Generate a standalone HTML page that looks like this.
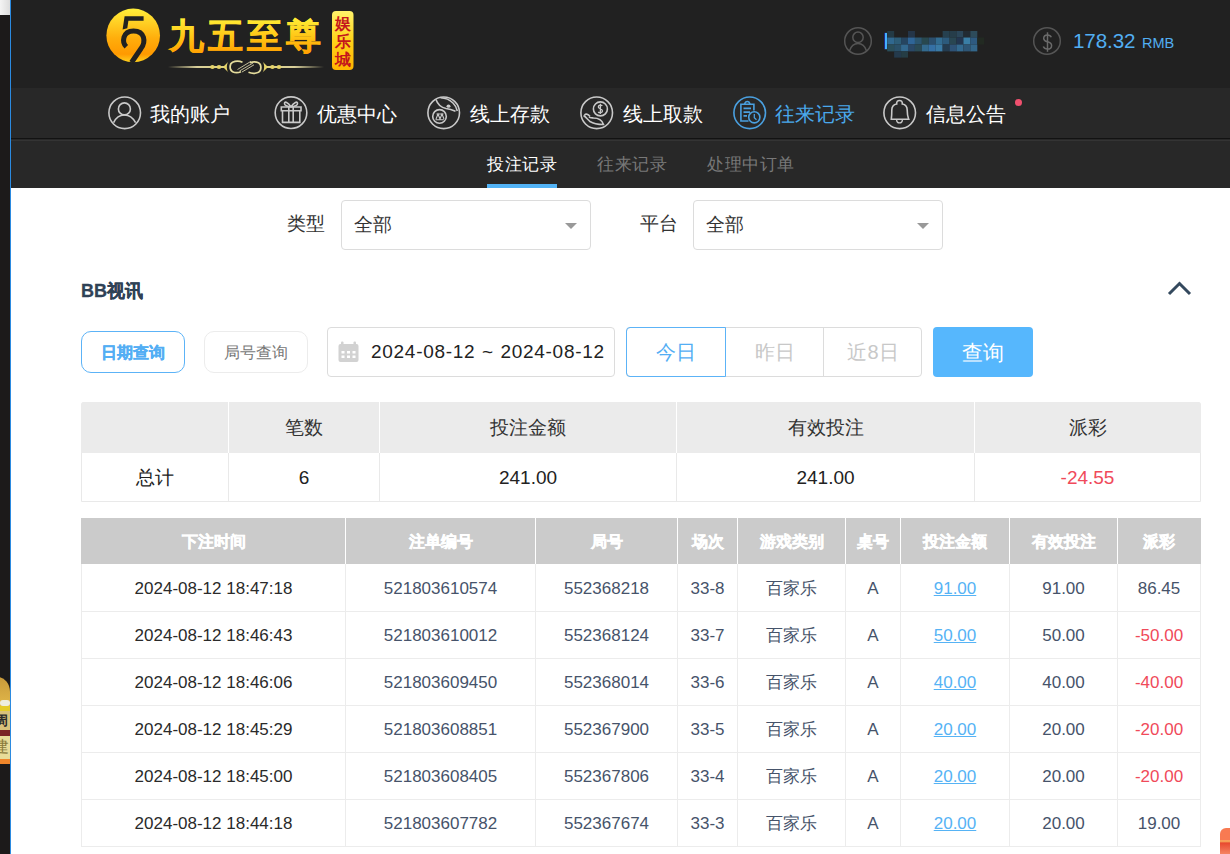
<!DOCTYPE html>
<html><head><meta charset="utf-8">
<style>
*{margin:0;padding:0;box-sizing:border-box}
html,body{width:1230px;height:854px;overflow:hidden;background:#fff;font-family:"Liberation Sans",sans-serif;color:#333}
.abs{position:absolute}
#lstrip{left:0;top:0;width:10px;height:854px;background:#1c1a1a}
#lwhite{left:0;top:0;width:10px;height:15px;background:linear-gradient(90deg,#f4f4f4,#dcdcdc)}
#lblue{left:10px;top:0;width:1px;height:854px;background:#2b8ae0}
#hdr{left:11px;top:0;width:1219px;height:88px;background:#212121}
#nav{left:11px;top:88px;width:1219px;height:50px;background:#282828}
#navline{left:11px;top:138px;width:1219px;height:3px;background:linear-gradient(#121212 0,#121212 33%,#282828 33%,#282828 66%,#343434 66%)}
#sub{left:11px;top:140px;width:1219px;height:48px;background:linear-gradient(#343434 0,#343434 1px,#282828 1px)}
.navt{position:absolute;top:101px;font-size:20px;line-height:26px;color:#fff;white-space:nowrap}
.subt{position:absolute;top:150.5px;font-size:17.45px;line-height:26px;color:#787878;white-space:nowrap;letter-spacing:0.6px}
.lbl{position:absolute;font-size:19px;line-height:24px;color:#333}
.sel{position:absolute;border:1px solid #dcdcdc;border-radius:4px;background:#fff}
.sel span{position:absolute;left:12px;top:12px;font-size:19px;line-height:24px;color:#333}
.sel i{position:absolute;right:13px;top:22px;width:0;height:0;border-left:6px solid transparent;border-right:6px solid transparent;border-top:6px solid #999}
.c{position:absolute;text-align:center;white-space:nowrap}
.hl{position:absolute;height:1px}
.vl{position:absolute;width:1px}
</style></head><body>
<div id="lstrip" class="abs"></div><div id="lwhite" class="abs"></div><div id="lblue" class="abs"></div>
<div id="hdr" class="abs"></div><div id="nav" class="abs"></div><div id="navline" class="abs"></div><div id="sub" class="abs"></div>
<!-- logo -->
<svg class="abs" style="left:0;top:0" width="400" height="88" viewBox="0 0 400 88">
<defs>
<linearGradient id="gc" x1="0" y1="0" x2="0" y2="1"><stop offset="0" stop-color="#ffee3a"/><stop offset="0.55" stop-color="#ffae0c"/><stop offset="0.85" stop-color="#ff9900"/><stop offset="1" stop-color="#ffd21e"/></linearGradient>
<linearGradient id="gt" x1="0" y1="0" x2="0" y2="1"><stop offset="0" stop-color="#fff23a"/><stop offset="0.6" stop-color="#ffbf10"/><stop offset="1" stop-color="#ff9c00"/></linearGradient>
<linearGradient id="gb" x1="0" y1="0" x2="0" y2="1"><stop offset="0" stop-color="#fff36a"/><stop offset="0.5" stop-color="#ffd21a"/><stop offset="1" stop-color="#ffb400"/></linearGradient>
<linearGradient id="gl" x1="0" y1="0" x2="1" y2="0"><stop offset="0" stop-color="#e8dca0" stop-opacity="0"/><stop offset="0.3" stop-color="#e8dca0"/><stop offset="0.7" stop-color="#e8dca0"/><stop offset="1" stop-color="#e8dca0" stop-opacity="0"/></linearGradient>
</defs>
<circle cx="133.2" cy="35.4" r="26.8" fill="url(#gc)"/>
<path d="M124.6 16.3 H143.6 V20.7 H128.4 L127.3 28.2 L122.6 29.6 Z" fill="#212121"/>
<path d="M126.3 46.8 C121.8 42.5 122.3 31 133.5 30.9 C145 31 146 42 141 48.5 L131.5 62.5" fill="none" stroke="#212121" stroke-width="5"/>
<text x="168.5" y="48.3" font-family="Liberation Sans, sans-serif" font-weight="bold" font-size="35" fill="url(#gt)" stroke="url(#gt)" stroke-width="0.5" letter-spacing="4">九五至尊</text>
<rect x="332" y="11" width="21.5" height="59" rx="4" fill="url(#gb)"/>
<text font-family="Liberation Serif, serif" font-weight="bold" font-size="15.5" fill="#c4161c"><tspan x="335" y="29">娱</tspan><tspan x="335" y="47">乐</tspan><tspan x="335" y="65">城</tspan></text>
<linearGradient id="gl2" x1="0" y1="0" x2="1" y2="0"><stop offset="0" stop-color="#d8cf9a" stop-opacity="0"/><stop offset="0.5" stop-color="#d8cf9a"/><stop offset="1" stop-color="#e0d488"/></linearGradient>
<linearGradient id="gl3" x1="1" y1="0" x2="0" y2="0"><stop offset="0" stop-color="#d8cf9a" stop-opacity="0"/><stop offset="0.5" stop-color="#d8cf9a"/><stop offset="1" stop-color="#e0d488"/></linearGradient>
<rect x="168" y="66" width="58" height="2" fill="url(#gl2)"/>
<rect x="265" y="66" width="59" height="2" fill="url(#gl3)"/>
<g fill="#e6d46a"><ellipse cx="212.4" cy="67" rx="2.3" ry="1.9"/><ellipse cx="219" cy="67" rx="2.3" ry="1.9"/><ellipse cx="272.4" cy="67" rx="2.3" ry="1.9"/><ellipse cx="279" cy="67" rx="2.3" ry="1.9"/>
<path d="M223 67 L228.5 61.5 C226.3 64 226.3 70 228.5 72.5 Z"/><path d="M268 67 L262.5 61.5 C264.7 64 264.7 70 262.5 72.5 Z"/></g>
<g fill="none" stroke="#e4dc9c" stroke-width="1.7">
<path d="M242.5 62.3 C239.5 61 235.5 61 232.5 62.3 C229.3 64 229.3 70 232.5 71.7 C235 73 238.5 72.8 241 71.8"/>
<path d="M248.5 72.2 C251.5 73.5 255.5 73.5 258.5 72.2 C261.7 70.5 261.7 64.5 258.5 62.8 C256 61.5 252.5 61.7 250 62.7"/>
</g>
<g fill="none" stroke="#d6d0a8" stroke-width="0.9">
<path d="M237.5 69.5 L251 61.3 M239.5 71 L253 63 M242 72 L254 64.8"/>
</g>
</svg>

<!-- user -->
<svg class="abs" style="left:830px;top:20px" width="360" height="45" viewBox="830 20 360 45">
<g fill="none" stroke="#555" stroke-width="1.5">
<circle cx="858" cy="41" r="13.3"/>
<circle cx="858" cy="37.3" r="5.2"/>
<path d="M849.3 51.2 C851 46.2 854.5 43.6 858 43.6 C861.5 43.6 865 46.2 866.7 51.2"/>
<circle cx="1047" cy="41" r="13.3"/>
</g>
<g fill="none" stroke="#6a6a6a" stroke-width="1.5">
<path d="M1047.5 32.3 V51.8"/>
<path d="M1051.3 37.2 C1050.6 35.6 1049.2 34.9 1047.5 34.9 C1045.2 34.9 1043.7 36.3 1043.7 38.4 C1043.7 43.2 1051.6 40.2 1051.6 45.4 C1051.6 47.7 1049.9 49.1 1047.5 49.1 C1045.4 49.1 1043.9 48.2 1043.3 46.6"/>
</g>
<g><rect x="887.20" y="31" width="6.95" height="6.50" fill="#233a45"/>
<rect x="907.99" y="31" width="6.95" height="6.50" fill="#243548"/>
<rect x="942.64" y="31" width="6.95" height="6.50" fill="#26404f"/>
<rect x="949.57" y="31" width="6.95" height="6.50" fill="#263d4a"/>
<rect x="956.50" y="31" width="6.95" height="6.50" fill="#2b4659"/>
<rect x="963.43" y="31" width="6.95" height="6.50" fill="#222b33"/>
<rect x="970.36" y="31" width="6.95" height="6.50" fill="#2d4b5a"/>
<rect x="887.20" y="37.5" width="6.95" height="7.00" fill="#30688f"/>
<rect x="894.13" y="37.5" width="6.95" height="7.00" fill="#2d5d78"/>
<rect x="901.06" y="37.5" width="6.95" height="7.00" fill="#264560"/>
<rect x="907.99" y="37.5" width="6.95" height="7.00" fill="#2f6597"/>
<rect x="914.92" y="37.5" width="6.95" height="7.00" fill="#2b5670"/>
<rect x="921.85" y="37.5" width="6.95" height="7.00" fill="#28484f"/>
<rect x="928.78" y="37.5" width="6.95" height="7.00" fill="#2b4f6e"/>
<rect x="935.71" y="37.5" width="6.95" height="7.00" fill="#326c91"/>
<rect x="942.64" y="37.5" width="6.95" height="7.00" fill="#2c5a7c"/>
<rect x="949.57" y="37.5" width="6.95" height="7.00" fill="#294652"/>
<rect x="956.50" y="37.5" width="6.95" height="7.00" fill="#233650"/>
<rect x="963.43" y="37.5" width="6.95" height="7.00" fill="#3a7ea6"/>
<rect x="970.36" y="37.5" width="6.95" height="7.00" fill="#2e5a80"/>
<rect x="887.20" y="44.5" width="6.95" height="6.90" fill="#2a4e5a"/>
<rect x="894.13" y="44.5" width="6.95" height="6.90" fill="#2a5068"/>
<rect x="901.06" y="44.5" width="6.95" height="6.90" fill="#33698f"/>
<rect x="907.99" y="44.5" width="6.95" height="6.90" fill="#2a4866"/>
<rect x="914.92" y="44.5" width="6.95" height="6.90" fill="#2a4a55"/>
<rect x="921.85" y="44.5" width="6.95" height="6.90" fill="#336a8e"/>
<rect x="928.78" y="44.5" width="6.95" height="6.90" fill="#3570a5"/>
<rect x="935.71" y="44.5" width="6.95" height="6.90" fill="#3a7aa5"/>
<rect x="942.64" y="44.5" width="6.95" height="6.90" fill="#243c50"/>
<rect x="949.57" y="44.5" width="6.95" height="6.90" fill="#2e5276"/>
<rect x="956.50" y="44.5" width="6.95" height="6.90" fill="#33698f"/>
<rect x="963.43" y="44.5" width="6.95" height="6.90" fill="#2e5676"/>
<rect x="970.36" y="44.5" width="6.95" height="6.90" fill="#33668a"/>
<rect x="894.13" y="51.4" width="6.95" height="6.20" fill="#243a4c"/>
<rect x="901.06" y="51.4" width="6.95" height="6.20" fill="#253d45"/>
<rect x="977.3" y="37.5" width="6.9" height="7" fill="#222a22"/></g>
<rect x="884.6" y="32.9" width="2.4" height="16.3" fill="#45b0ff"/>
<rect x="884" y="32.9" width="0.8" height="16.3" fill="#1a2090"/>
</svg>
<div class="abs" style="left:1073px;top:27px;font-size:20.6px;line-height:28px;color:#52aef2;white-space:nowrap;letter-spacing:-0.1px">178.32</div>
<div class="abs" style="left:1142px;top:34px;font-size:14.5px;line-height:18px;color:#52aef2;white-space:nowrap">RMB</div>
<!-- nav icons -->
<svg class="abs" style="left:0;top:88px" width="1230" height="50" viewBox="0 88 1230 50">
<g fill="none" stroke="#c9c9c9" stroke-width="1.6">
<circle cx="124.7" cy="112.8" r="15.8"/>
<circle cx="124.4" cy="108.9" r="6"/>
<path d="M113.6 122.6 C116 117.5 120 115 124.4 115 C128.8 115 132.8 117.5 135.6 122.6"/>
<circle cx="291" cy="112.7" r="15.8"/>
<path d="M282.5 110.8 V122.4 H299.8 V110.8 M281.3 107 H301 V110.8 H281.3 Z M288.8 107 V122.4 M293.2 107 V122.4"/>
<path d="M291 106.8 C288 102 284.5 101 284.5 103.5 C284.5 105.5 288 106.5 291 106.8 C294 102 297.5 101 297.5 103.5 C297.5 105.5 294 106.5 291 106.8"/>
<circle cx="443.7" cy="112.8" r="15.8"/>
<circle cx="439.5" cy="116.4" r="6.8"/>
<path d="M436 119 L438 114 L440 119 L442 114 L444 119 M435.5 119.8 H443.8 M436.5 114 H443.5" stroke-width="1.1"/>
<path d="M436 99.5 C437.5 104 441 107.5 446 108.5 C449 109 452 109.8 455.5 111.2 M440.5 97.8 C446 98 450 100 453 103 C455.3 105.3 456.8 108 457.3 111"/><ellipse cx="448.5" cy="106.2" rx="2" ry="1.6" fill="#c9c9c9" stroke="none"/>
<circle cx="596.7" cy="112.8" r="15.8"/>
<circle cx="600.4" cy="108.9" r="7"/>
<path d="M602.3 105.8 C601.5 104.8 598.3 104.8 598.3 107 C598.3 109 602.5 108.5 602.5 111 C602.5 113 599 113 598.2 112 M600.4 103.8 V114" stroke-width="1.3"/>
<path d="M583.5 115.5 C586 117 588 120 590 121.5 C593 123.5 598 124.5 603.5 124.5 C602 120 597.5 118 593.5 118 C592 117.8 590 118 589 117 M584.5 115 C586 113.5 588 114 590 116.5"/>
<circle cx="899.7" cy="112.8" r="15.8"/>
<path d="M891.3 119.2 H908.7 C907.3 116 907.2 113 907.2 110 C907.2 106.5 905 104.5 902.3 104 C902.5 101.5 901.3 100.5 899.5 100.5 C897.7 100.5 896.5 101.5 896.7 104 C894 104.5 891.8 106.5 891.8 110 C891.8 113 891.7 116 891.3 119.2 Z"/>
<path d="M896.6 119.4 C896.6 124 902.4 124 902.4 119.4" stroke-width="1.4"/>
</g>
<g fill="none" stroke="#4aa0e0" stroke-width="1.6">
<circle cx="749.7" cy="112.8" r="15.8"/>
<path d="M748.5 121 H740.9 V104.3 H753.9 V110.5"/>
<path d="M744.5 104.3 C745 102.5 746 101.5 747.3 101.5 C748.6 101.5 749.6 102.5 750 104.3"/>
<path d="M743.5 108.4 H751 M743.5 112.1 H750 M743.5 115.9 H747"/>
<circle cx="754.3" cy="117.3" r="5.6"/>
<path d="M754.3 114 V117.8 L756.5 119.8" stroke-width="1.3"/>
</g>
</svg>


<div class="navt" style="left:150px">我的账户</div>
<div class="navt" style="left:317px">优惠中心</div>
<div class="navt" style="left:470px">线上存款</div>
<div class="navt" style="left:623px">线上取款</div>
<div class="navt" style="left:775px;color:#4aa8ec">往来记录</div>
<div class="navt" style="left:926px">信息公告</div>
<div class="abs" style="left:1015px;top:99px;width:7px;height:7px;border-radius:50%;background:#f0506e"></div>
<div class="subt" style="left:487px;color:#fff">投注记录</div>
<div class="abs" style="left:487px;top:184px;width:70px;height:4px;background:#52b3f6"></div>
<div class="subt" style="left:597px">往来记录</div>
<div class="subt" style="left:707px">处理中订单</div>

<div class="lbl" style="left:287px;top:212px">类型</div>
<div class="sel" style="left:341px;top:200px;width:250px;height:50px"><span>全部</span><i></i></div>
<div class="lbl" style="left:640px;top:212px">平台</div>
<div class="sel" style="left:693px;top:200px;width:250px;height:50px"><span>全部</span><i></i></div>

<div class="abs" style="left:81px;top:279px;font-size:18px;line-height:24px;font-weight:bold;color:#2f4256;white-space:nowrap;-webkit-text-stroke:0.3px #2f4256">BB视讯</div>
<svg class="abs" style="left:1160px;top:275px" width="40" height="30" viewBox="1160 275 40 30"><path d="M1169 294 L1179.5 283.5 L1190 294" fill="none" stroke="#34495e" stroke-width="3"/></svg>

<div class="abs" style="left:81px;top:331px;width:104px;height:42px;border:1px solid #5cb3f7;border-radius:10px;text-align:center;font-size:16px;line-height:42px;font-weight:bold;color:#53aef4;-webkit-text-stroke:0.3px #53aef4">日期查询</div>
<div class="abs" style="left:204px;top:331px;width:104px;height:42px;border:1px solid #ececec;border-radius:10px;text-align:center;font-size:16px;line-height:42px;color:#777">局号查询</div>

<div class="abs" style="left:327px;top:327px;width:288px;height:50px;border:1px solid #dcdcdc;border-radius:4px"></div>
<svg class="abs" style="left:336px;top:340px" width="26" height="26" viewBox="336 340 26 26">
<rect x="338.5" y="344" width="20" height="18" rx="2" fill="#d2d2d2"/>
<rect x="341" y="341.5" width="2.5" height="5" rx="1" fill="#d2d2d2"/><rect x="353.5" y="341.5" width="2.5" height="5" rx="1" fill="#d2d2d2"/>
<g fill="#fff"><rect x="341.5" y="351" width="3" height="2.5"/><rect x="347" y="351" width="3" height="2.5"/><rect x="352.5" y="351" width="3" height="2.5"/><rect x="341.5" y="355.5" width="3" height="2.5"/><rect x="347" y="355.5" width="3" height="2.5"/><rect x="352.5" y="355.5" width="3" height="2.5"/></g>
</svg>
<div class="abs" style="left:371px;top:339px;font-size:19px;line-height:26px;color:#222;white-space:nowrap;letter-spacing:0.72px;word-spacing:0.6px">2024-08-12 ~ 2024-08-12</div>

<div class="abs" style="left:626px;top:327px;width:296px;height:50px;border:1px solid #dcdcdc;border-radius:4px"></div>
<div class="abs" style="left:725px;top:327px;width:1px;height:50px;background:#dcdcdc"></div>
<div class="abs" style="left:823px;top:327px;width:1px;height:50px;background:#dcdcdc"></div>
<div class="abs" style="left:626px;top:327px;width:100px;height:50px;border:1px solid #5cb3f7;border-radius:4px 0 0 4px;text-align:center;font-size:20px;line-height:48px;color:#53aef4">今日</div>
<div class="abs" style="left:726px;top:327px;width:98px;height:50px;text-align:center;font-size:20px;line-height:50px;color:#c8c8c8">昨日</div>
<div class="abs" style="left:824px;top:327px;width:98px;height:50px;text-align:center;font-size:20px;line-height:50px;color:#c8c8c8">近8日</div>
<div class="abs" style="left:933px;top:327px;width:100px;height:50px;border-radius:4px;background:#56b7fd;text-align:center;font-size:21px;line-height:51px;color:#fff">查询</div>


<div class="abs" style="left:0;top:677px;width:10px;height:87px;overflow:hidden">
<div class="abs" style="left:-14px;top:0;width:24px;height:30px;border-radius:50% 50% 0 0;background:linear-gradient(#c89a3a,#e2b84a)"></div>
<div class="abs" style="left:0;top:23px;width:10px;height:6px;background:#eeeede;border-radius:3px"></div>
<div class="abs" style="left:0;top:29px;width:10px;height:5px;background:#e4cc2a"></div>
<div class="abs" style="left:0;top:34px;width:10px;height:19px;background:#d9c27a"></div>
<div class="abs" style="left:0;top:37px;width:8px;height:13px;font-size:13px;line-height:13px;color:#2a2a2a;font-weight:bold;overflow:hidden"><span style="position:absolute;left:-5px">周</span></div>
<div class="abs" style="left:0;top:53px;width:10px;height:6px;background:#7c2424"></div>
<div class="abs" style="left:0;top:59px;width:10px;height:23px;background:#e9dc98"></div>
<div class="abs" style="left:0;top:61px;width:10px;height:18px;font-size:16px;line-height:18px;color:#8a7a3a;overflow:hidden"><span style="position:absolute;left:-7px">建</span></div>
<div class="abs" style="left:0;top:82px;width:10px;height:5px;background:#f0862a"></div>
</div>
<div class="abs" style="left:1220px;top:828px;width:14px;height:26px;border-radius:6px 0 0 0;background:linear-gradient(#f87a52 0%,#f87a52 45%,#f9b860 50%,#e84a30 58%,#f58462 100%)"></div>

<div class="abs" style="left:81px;top:402px;width:1120px;height:100px;border:1px solid #e9e9e9;border-radius:3px 3px 0 0;background:#fff"></div>
<div class="abs" style="left:81px;top:402px;width:1120px;height:51px;background:#ebebeb;border-radius:3px 3px 0 0"></div>
<div class="vl" style="left:228px;top:402px;height:51px;background:#fff"></div>
<div class="vl" style="left:228px;top:453px;height:48px;background:#e9e9e9"></div>
<div class="vl" style="left:379px;top:402px;height:51px;background:#fff"></div>
<div class="vl" style="left:379px;top:453px;height:48px;background:#e9e9e9"></div>
<div class="vl" style="left:676px;top:402px;height:51px;background:#fff"></div>
<div class="vl" style="left:676px;top:453px;height:48px;background:#e9e9e9"></div>
<div class="vl" style="left:974px;top:402px;height:51px;background:#fff"></div>
<div class="vl" style="left:974px;top:453px;height:48px;background:#e9e9e9"></div>
<div class="c" style="left:81px;width:148px;top:402px;height:51px;line-height:52px;font-size:19px;color:#333"></div>
<div class="c" style="left:81px;width:148px;top:453px;height:48px;line-height:50px;font-size:19px;color:#222">总计</div>
<div class="c" style="left:228px;width:152px;top:402px;height:51px;line-height:52px;font-size:19px;color:#333">笔数</div>
<div class="c" style="left:228px;width:152px;top:453px;height:48px;line-height:50px;font-size:19px;color:#222">6</div>
<div class="c" style="left:379px;width:298px;top:402px;height:51px;line-height:52px;font-size:19px;color:#333">投注金额</div>
<div class="c" style="left:379px;width:298px;top:453px;height:48px;line-height:50px;font-size:19px;color:#222">241.00</div>
<div class="c" style="left:676px;width:299px;top:402px;height:51px;line-height:52px;font-size:19px;color:#333">有效投注</div>
<div class="c" style="left:676px;width:299px;top:453px;height:48px;line-height:50px;font-size:19px;color:#222">241.00</div>
<div class="c" style="left:974px;width:227px;top:402px;height:51px;line-height:52px;font-size:19px;color:#333">派彩</div>
<div class="c" style="left:974px;width:227px;top:453px;height:48px;line-height:50px;font-size:19px;color:#f04a5a">-24.55</div>
<div class="abs" style="left:81px;top:518px;width:1120px;height:46px;background:#cbcbcb"></div>
<div class="vl" style="left:81px;top:564px;height:283px;background:#ececec"></div>
<div class="vl" style="left:1200px;top:564px;height:283px;background:#ececec"></div>
<div class="vl" style="left:345px;top:518px;height:46px;background:#fff"></div>
<div class="vl" style="left:345px;top:564px;height:283px;background:#ececec"></div>
<div class="vl" style="left:535px;top:518px;height:46px;background:#fff"></div>
<div class="vl" style="left:535px;top:564px;height:283px;background:#ececec"></div>
<div class="vl" style="left:677px;top:518px;height:46px;background:#fff"></div>
<div class="vl" style="left:677px;top:564px;height:283px;background:#ececec"></div>
<div class="vl" style="left:737px;top:518px;height:46px;background:#fff"></div>
<div class="vl" style="left:737px;top:564px;height:283px;background:#ececec"></div>
<div class="vl" style="left:845px;top:518px;height:46px;background:#fff"></div>
<div class="vl" style="left:845px;top:564px;height:283px;background:#ececec"></div>
<div class="vl" style="left:900px;top:518px;height:46px;background:#fff"></div>
<div class="vl" style="left:900px;top:564px;height:283px;background:#ececec"></div>
<div class="vl" style="left:1009px;top:518px;height:46px;background:#fff"></div>
<div class="vl" style="left:1009px;top:564px;height:283px;background:#ececec"></div>
<div class="vl" style="left:1117px;top:518px;height:46px;background:#fff"></div>
<div class="vl" style="left:1117px;top:564px;height:283px;background:#ececec"></div>
<div class="hl" style="left:81px;top:611px;width:1120px;background:#ececec"></div>
<div class="hl" style="left:81px;top:658px;width:1120px;background:#ececec"></div>
<div class="hl" style="left:81px;top:705px;width:1120px;background:#ececec"></div>
<div class="hl" style="left:81px;top:752px;width:1120px;background:#ececec"></div>
<div class="hl" style="left:81px;top:799px;width:1120px;background:#ececec"></div>
<div class="hl" style="left:81px;top:846px;width:1120px;background:#ececec"></div>
<div class="c" style="left:81px;width:265px;top:518px;height:46px;line-height:47px;font-size:16px;font-weight:bold;color:#fff;-webkit-text-stroke:0.45px #fff">下注时间</div>
<div class="c" style="left:345px;width:191px;top:518px;height:46px;line-height:47px;font-size:16px;font-weight:bold;color:#fff;-webkit-text-stroke:0.45px #fff">注单编号</div>
<div class="c" style="left:535px;width:143px;top:518px;height:46px;line-height:47px;font-size:16px;font-weight:bold;color:#fff;-webkit-text-stroke:0.45px #fff">局号</div>
<div class="c" style="left:677px;width:61px;top:518px;height:46px;line-height:47px;font-size:16px;font-weight:bold;color:#fff;-webkit-text-stroke:0.45px #fff">场次</div>
<div class="c" style="left:737px;width:109px;top:518px;height:46px;line-height:47px;font-size:16px;font-weight:bold;color:#fff;-webkit-text-stroke:0.45px #fff">游戏类别</div>
<div class="c" style="left:845px;width:56px;top:518px;height:46px;line-height:47px;font-size:16px;font-weight:bold;color:#fff;-webkit-text-stroke:0.45px #fff">桌号</div>
<div class="c" style="left:900px;width:110px;top:518px;height:46px;line-height:47px;font-size:16px;font-weight:bold;color:#fff;-webkit-text-stroke:0.45px #fff">投注金额</div>
<div class="c" style="left:1009px;width:109px;top:518px;height:46px;line-height:47px;font-size:16px;font-weight:bold;color:#fff;-webkit-text-stroke:0.45px #fff">有效投注</div>
<div class="c" style="left:1117px;width:84px;top:518px;height:46px;line-height:47px;font-size:16px;font-weight:bold;color:#fff;-webkit-text-stroke:0.45px #fff">派彩</div>
<div class="c" style="left:81px;width:265px;top:566px;height:46px;line-height:46px;font-size:17px;color:#2a2a2a">2024-08-12 18:47:18</div>
<div class="c" style="left:345px;width:191px;top:566px;height:46px;line-height:46px;font-size:17px;color:#46536a">521803610574</div>
<div class="c" style="left:535px;width:143px;top:566px;height:46px;line-height:46px;font-size:17px;color:#46536a">552368218</div>
<div class="c" style="left:677px;width:61px;top:566px;height:46px;line-height:46px;font-size:17px;color:#46536a">33-8</div>
<div class="c" style="left:737px;width:109px;top:566px;height:46px;line-height:46px;font-size:17px;color:#46536a">百家乐</div>
<div class="c" style="left:845px;width:56px;top:566px;height:46px;line-height:46px;font-size:17px;color:#46536a">A</div>
<div class="c" style="left:900px;width:110px;top:566px;height:46px;line-height:46px;font-size:17px;color:#56b3f5"><u>91.00</u></div>
<div class="c" style="left:1009px;width:109px;top:566px;height:46px;line-height:46px;font-size:17px;color:#46536a">91.00</div>
<div class="c" style="left:1117px;width:84px;top:566px;height:46px;line-height:46px;font-size:17px;color:#46536a">86.45</div>
<div class="c" style="left:81px;width:265px;top:613px;height:46px;line-height:46px;font-size:17px;color:#2a2a2a">2024-08-12 18:46:43</div>
<div class="c" style="left:345px;width:191px;top:613px;height:46px;line-height:46px;font-size:17px;color:#46536a">521803610012</div>
<div class="c" style="left:535px;width:143px;top:613px;height:46px;line-height:46px;font-size:17px;color:#46536a">552368124</div>
<div class="c" style="left:677px;width:61px;top:613px;height:46px;line-height:46px;font-size:17px;color:#46536a">33-7</div>
<div class="c" style="left:737px;width:109px;top:613px;height:46px;line-height:46px;font-size:17px;color:#46536a">百家乐</div>
<div class="c" style="left:845px;width:56px;top:613px;height:46px;line-height:46px;font-size:17px;color:#46536a">A</div>
<div class="c" style="left:900px;width:110px;top:613px;height:46px;line-height:46px;font-size:17px;color:#56b3f5"><u>50.00</u></div>
<div class="c" style="left:1009px;width:109px;top:613px;height:46px;line-height:46px;font-size:17px;color:#46536a">50.00</div>
<div class="c" style="left:1117px;width:84px;top:613px;height:46px;line-height:46px;font-size:17px;color:#f04a5a">-50.00</div>
<div class="c" style="left:81px;width:265px;top:660px;height:46px;line-height:46px;font-size:17px;color:#2a2a2a">2024-08-12 18:46:06</div>
<div class="c" style="left:345px;width:191px;top:660px;height:46px;line-height:46px;font-size:17px;color:#46536a">521803609450</div>
<div class="c" style="left:535px;width:143px;top:660px;height:46px;line-height:46px;font-size:17px;color:#46536a">552368014</div>
<div class="c" style="left:677px;width:61px;top:660px;height:46px;line-height:46px;font-size:17px;color:#46536a">33-6</div>
<div class="c" style="left:737px;width:109px;top:660px;height:46px;line-height:46px;font-size:17px;color:#46536a">百家乐</div>
<div class="c" style="left:845px;width:56px;top:660px;height:46px;line-height:46px;font-size:17px;color:#46536a">A</div>
<div class="c" style="left:900px;width:110px;top:660px;height:46px;line-height:46px;font-size:17px;color:#56b3f5"><u>40.00</u></div>
<div class="c" style="left:1009px;width:109px;top:660px;height:46px;line-height:46px;font-size:17px;color:#46536a">40.00</div>
<div class="c" style="left:1117px;width:84px;top:660px;height:46px;line-height:46px;font-size:17px;color:#f04a5a">-40.00</div>
<div class="c" style="left:81px;width:265px;top:707px;height:46px;line-height:46px;font-size:17px;color:#2a2a2a">2024-08-12 18:45:29</div>
<div class="c" style="left:345px;width:191px;top:707px;height:46px;line-height:46px;font-size:17px;color:#46536a">521803608851</div>
<div class="c" style="left:535px;width:143px;top:707px;height:46px;line-height:46px;font-size:17px;color:#46536a">552367900</div>
<div class="c" style="left:677px;width:61px;top:707px;height:46px;line-height:46px;font-size:17px;color:#46536a">33-5</div>
<div class="c" style="left:737px;width:109px;top:707px;height:46px;line-height:46px;font-size:17px;color:#46536a">百家乐</div>
<div class="c" style="left:845px;width:56px;top:707px;height:46px;line-height:46px;font-size:17px;color:#46536a">A</div>
<div class="c" style="left:900px;width:110px;top:707px;height:46px;line-height:46px;font-size:17px;color:#56b3f5"><u>20.00</u></div>
<div class="c" style="left:1009px;width:109px;top:707px;height:46px;line-height:46px;font-size:17px;color:#46536a">20.00</div>
<div class="c" style="left:1117px;width:84px;top:707px;height:46px;line-height:46px;font-size:17px;color:#f04a5a">-20.00</div>
<div class="c" style="left:81px;width:265px;top:754px;height:46px;line-height:46px;font-size:17px;color:#2a2a2a">2024-08-12 18:45:00</div>
<div class="c" style="left:345px;width:191px;top:754px;height:46px;line-height:46px;font-size:17px;color:#46536a">521803608405</div>
<div class="c" style="left:535px;width:143px;top:754px;height:46px;line-height:46px;font-size:17px;color:#46536a">552367806</div>
<div class="c" style="left:677px;width:61px;top:754px;height:46px;line-height:46px;font-size:17px;color:#46536a">33-4</div>
<div class="c" style="left:737px;width:109px;top:754px;height:46px;line-height:46px;font-size:17px;color:#46536a">百家乐</div>
<div class="c" style="left:845px;width:56px;top:754px;height:46px;line-height:46px;font-size:17px;color:#46536a">A</div>
<div class="c" style="left:900px;width:110px;top:754px;height:46px;line-height:46px;font-size:17px;color:#56b3f5"><u>20.00</u></div>
<div class="c" style="left:1009px;width:109px;top:754px;height:46px;line-height:46px;font-size:17px;color:#46536a">20.00</div>
<div class="c" style="left:1117px;width:84px;top:754px;height:46px;line-height:46px;font-size:17px;color:#f04a5a">-20.00</div>
<div class="c" style="left:81px;width:265px;top:801px;height:46px;line-height:46px;font-size:17px;color:#2a2a2a">2024-08-12 18:44:18</div>
<div class="c" style="left:345px;width:191px;top:801px;height:46px;line-height:46px;font-size:17px;color:#46536a">521803607782</div>
<div class="c" style="left:535px;width:143px;top:801px;height:46px;line-height:46px;font-size:17px;color:#46536a">552367674</div>
<div class="c" style="left:677px;width:61px;top:801px;height:46px;line-height:46px;font-size:17px;color:#46536a">33-3</div>
<div class="c" style="left:737px;width:109px;top:801px;height:46px;line-height:46px;font-size:17px;color:#46536a">百家乐</div>
<div class="c" style="left:845px;width:56px;top:801px;height:46px;line-height:46px;font-size:17px;color:#46536a">A</div>
<div class="c" style="left:900px;width:110px;top:801px;height:46px;line-height:46px;font-size:17px;color:#56b3f5"><u>20.00</u></div>
<div class="c" style="left:1009px;width:109px;top:801px;height:46px;line-height:46px;font-size:17px;color:#46536a">20.00</div>
<div class="c" style="left:1117px;width:84px;top:801px;height:46px;line-height:46px;font-size:17px;color:#46536a">19.00</div>
</body></html>
